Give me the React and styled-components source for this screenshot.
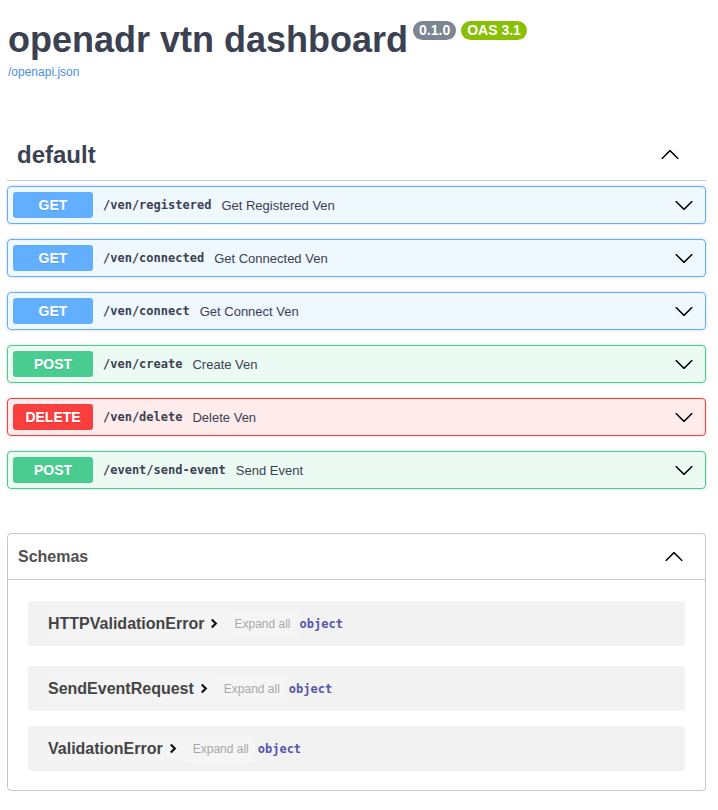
import React from 'react';
import styled, { createGlobalStyle } from 'styled-components';

const GlobalStyle = createGlobalStyle`
  body {
    margin: 0;
    background: #fff;
    font-family: 'Liberation Sans', Arial, sans-serif;
    color: #3b4151;
  }
`;

// --- method colours ---
const METHODS = {
  GET: { main: '#61affe', bg: 'rgba(97, 175, 254, 0.1)' },
  POST: { main: '#49cc90', bg: 'rgba(73, 204, 144, 0.1)' },
  DELETE: { main: '#f93e3e', bg: 'rgba(249, 62, 62, 0.1)' },
};

const Wrapper = styled.div`
  padding: 18px 12px 20px 7px;
`;

const TitleRow = styled.div`
  display: flex;
  align-items: flex-start;
  padding-left: 1px;
`;

const Title = styled.h1`
  margin: 0;
  font-size: 36px;
  line-height: 44px;
  font-weight: 700;
  color: #3b4151;
`;

const Badge = styled.span`
  margin: 3px 0 0 5px;
  padding: 0 6px;
  height: 19px;
  line-height: 19px;
  border-radius: 57px;
  background: ${(p) => p.$color};
  color: #fff;
  font-size: 14px;
  font-weight: 700;
`;

const SpecLink = styled.a`
  display: block;
  margin: 3px 0 0 1px;
  font-size: 12px;
  line-height: 14px;
  color: #4990e2;
  text-decoration: none;
`;

const TagSection = styled.section`
  margin-top: 51px;
`;

const TagHeader = styled.div`
  display: flex;
  align-items: center;
  height: 50px;
  padding: 0 20px 0 10px;
  border-bottom: 1px solid rgba(59, 65, 81, 0.3);
`;

const TagTitle = styled.h3`
  margin: 0;
  font-size: 24px;
  font-weight: 700;
  color: #3b4151;
  flex: 1;
`;

const ArrowIcon = styled.svg`
  width: 20px;
  height: 20px;
  flex-shrink: 0;
  margin-right: 6px;
  transform: ${(p) => (p.$up ? 'rotate(180deg)' : 'none')};
`;

const OpList = styled.div`
  display: flex;
  flex-direction: column;
  gap: 15px;
  margin-top: 5px;
`;

const OpBlock = styled.div`
  display: flex;
  align-items: center;
  padding: 5px;
  border: 1px solid ${(p) => METHODS[p.$method].main};
  background: ${(p) => METHODS[p.$method].bg};
  border-radius: 4px;
  box-shadow: 0 0 3px rgba(0, 0, 0, 0.19);
`;

const MethodBadge = styled.span`
  width: 80px;
  height: 26px;
  line-height: 26px;
  text-align: center;
  border-radius: 3px;
  background: ${(p) => METHODS[p.$method].main};
  color: #fff;
  font-size: 14px;
  font-weight: 700;
  text-shadow: 0 1px 0 rgba(0, 0, 0, 0.1);
  flex-shrink: 0;
`;

const OpPath = styled.span`
  padding: 0 10px;
  font-family: 'DejaVu Sans Mono', 'Liberation Mono', monospace;
  font-size: 12px;
  font-weight: 700;
  color: #3b4151;
`;

const OpDescription = styled.span`
  flex: 1;
  font-size: 13px;
  color: #3b4151;
`;

const SchemasBox = styled.section`
  margin-top: 44px;
  border: 1px solid rgba(59, 65, 81, 0.3);
  border-radius: 4px;
`;

const SchemasHeader = styled.div`
  display: flex;
  align-items: center;
  height: 45px;
  padding: 0 15px 0 10px;
  border-bottom: 1px solid rgba(59, 65, 81, 0.3);
`;

const SchemasTitle = styled.h4`
  flex: 1;
  margin: 0;
  font-size: 16px;
  font-weight: 700;
  color: #505050;
`;

const SchemaList = styled.div`
  display: flex;
  flex-direction: column;
  gap: 15px;
  padding: 21px 20px 19px;
`;

const SchemaRow = styled.div`
  display: flex;
  align-items: center;
  height: 45px;
  padding: 0 20px;
  background: rgba(0, 0, 0, 0.05);
  border-radius: 4px;

  &:first-child {
    margin-bottom: 5px;
  }
`;

const SchemaName = styled.span`
  display: flex;
  align-items: center;
  gap: 6px;
  padding-right: 10px;
  font-size: 16px;
  font-weight: 700;
  color: #444;
  line-height: 28px;
  background: rgba(255, 255, 255, 0.15);
`;

const ExpandAll = styled.span`
  padding: 0 6px;
  font-size: 12px;
  line-height: 28px;
  color: #a8a8a8;
  background: rgba(255, 255, 255, 0.25);
`;

const TypeLabel = styled.span`
  margin-left: 3px;
  font-family: 'DejaVu Sans Mono', 'Liberation Mono', monospace;
  font-size: 12px;
  font-weight: 700;
  color: #55a;
`;

const Arrow = ({ up }) => (
  <ArrowIcon $up={up} viewBox="0 0 20 20">
    <path
      fill="#000"
      d="M17.418 6.109c.272-.268.709-.268.979 0s.271.701 0 .969l-7.908 7.83c-.27.268-.707.268-.979 0l-7.908-7.83c-.27-.268-.27-.701 0-.969.271-.268.709-.268.979 0L10 13.25l7.418-7.141z"
    />
  </ArrowIcon>
);

const SmallChevron = () => (
  <svg width="8" height="11" viewBox="0 0 8 11">
    <path d="M1.8 1.5 L5.8 5.5 L1.8 9.5" fill="none" stroke="#111" strokeWidth="2.2" />
  </svg>
);

const operations = [
  { method: 'GET', path: '/ven/registered', summary: 'Get Registered Ven' },
  { method: 'GET', path: '/ven/connected', summary: 'Get Connected Ven' },
  { method: 'GET', path: '/ven/connect', summary: 'Get Connect Ven' },
  { method: 'POST', path: '/ven/create', summary: 'Create Ven' },
  { method: 'DELETE', path: '/ven/delete', summary: 'Delete Ven' },
  { method: 'POST', path: '/event/send-event', summary: 'Send Event' },
];

const schemas = ['HTTPValidationError', 'SendEventRequest', 'ValidationError'];

const App = () => {
  return (
    <>
      <GlobalStyle />
      <Wrapper>
        <TitleRow>
          <Title>openadr vtn dashboard</Title>
          <Badge $color="#7d8492">0.1.0</Badge>
          <Badge $color="#89bf04">OAS 3.1</Badge>
        </TitleRow>
        <SpecLink href="#">/openapi.json</SpecLink>

        <TagSection>
          <TagHeader>
            <TagTitle>default</TagTitle>
            <Arrow up />
          </TagHeader>
          <OpList>
            {operations.map((op) => (
              <OpBlock key={op.path} $method={op.method}>
                <MethodBadge $method={op.method}>{op.method}</MethodBadge>
                <OpPath>{op.path}</OpPath>
                <OpDescription>{op.summary}</OpDescription>
                <Arrow />
              </OpBlock>
            ))}
          </OpList>
        </TagSection>

        <SchemasBox>
          <SchemasHeader>
            <SchemasTitle>Schemas</SchemasTitle>
            <Arrow up />
          </SchemasHeader>
          <SchemaList>
            {schemas.map((name) => (
              <SchemaRow key={name}>
                <SchemaName>
                  {name}
                  <SmallChevron />
                </SchemaName>
                <ExpandAll>Expand all</ExpandAll>
                <TypeLabel>object</TypeLabel>
              </SchemaRow>
            ))}
          </SchemaList>
        </SchemasBox>
      </Wrapper>
    </>
  );
};

export default App;
